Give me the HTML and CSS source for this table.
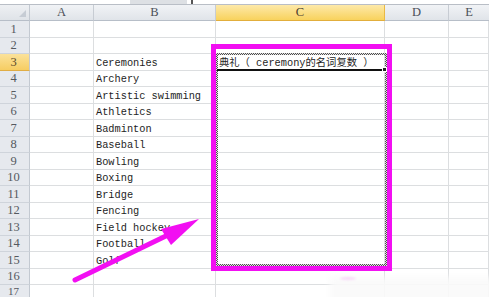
FILE: index.html
```html
<!DOCTYPE html>
<html>
<head>
<meta charset="utf-8">
<link rel="stylesheet" href="styles.css">
</head>
<body>
<div class="sheet">
  <div class="topbar"><span class="namebox"></span><span class="fxmark"></span></div>
  <div class="grid">
    <div class="corner"><span class="tri"></span></div>
    <div class="ch">A</div><div class="ch">B</div><div class="ch sel">C</div><div class="ch">D</div><div class="ch last">E</div>

    <div class="rh">1</div><div class="c"></div><div class="c"></div><div class="c"></div><div class="c"></div><div class="c"></div>
    <div class="rh">2</div><div class="c"></div><div class="c"></div><div class="c"></div><div class="c"></div><div class="c"></div>
    <div class="rh sel">3</div><div class="c"></div><div class="c t">Ceremonies</div><div class="c t head">典礼（ ceremony的名词复数 ）</div><div class="c"></div><div class="c"></div>
    <div class="rh">4</div><div class="c"></div><div class="c t">Archery</div><div class="c"></div><div class="c"></div><div class="c"></div>
    <div class="rh">5</div><div class="c"></div><div class="c t">Artistic swimming</div><div class="c"></div><div class="c"></div><div class="c"></div>
    <div class="rh">6</div><div class="c"></div><div class="c t">Athletics</div><div class="c"></div><div class="c"></div><div class="c"></div>
    <div class="rh">7</div><div class="c"></div><div class="c t">Badminton</div><div class="c"></div><div class="c"></div><div class="c"></div>
    <div class="rh">8</div><div class="c"></div><div class="c t">Baseball</div><div class="c"></div><div class="c"></div><div class="c"></div>
    <div class="rh">9</div><div class="c"></div><div class="c t">Bowling</div><div class="c"></div><div class="c"></div><div class="c"></div>
    <div class="rh">10</div><div class="c"></div><div class="c t">Boxing</div><div class="c"></div><div class="c"></div><div class="c"></div>
    <div class="rh">11</div><div class="c"></div><div class="c t">Bridge</div><div class="c"></div><div class="c"></div><div class="c"></div>
    <div class="rh">12</div><div class="c"></div><div class="c t">Fencing</div><div class="c"></div><div class="c"></div><div class="c"></div>
    <div class="rh">13</div><div class="c"></div><div class="c t">Field hockey</div><div class="c"></div><div class="c"></div><div class="c"></div>
    <div class="rh">14</div><div class="c"></div><div class="c t">Football</div><div class="c"></div><div class="c"></div><div class="c"></div>
    <div class="rh">15</div><div class="c"></div><div class="c t">Golf</div><div class="c"></div><div class="c"></div><div class="c"></div>
    <div class="rh">16</div><div class="c"></div><div class="c"></div><div class="c"></div><div class="c"></div><div class="c"></div>
    <div class="rh edge"><span class="num">17</span></div><div class="c"></div><div class="c"></div><div class="c"></div><div class="c"></div><div class="c"></div>
  </div>

  <div class="ants"></div>
  <div class="active-line"></div>
  <div class="handle"></div>
  <div class="mark"></div>

  <svg class="arrow" width="489" height="297" viewBox="0 0 489 297">
    <line x1="75" y1="280" x2="170" y2="234" stroke="#f20ff2" stroke-width="5" stroke-linecap="round"/>
    <polygon points="199,219 161,229 171,245" fill="#f20ff2"/>
  </svg>

  <div class="fade"></div>
  <div class="smudge"></div>
</div>
</body>
</html>
```

FILE: styles.css
```css
html, body {
  margin: 0;
  padding: 0;
  background: #ffffff;
  overflow: hidden;
}

.sheet {
  position: relative;
  width: 489px;
  height: 297px;
  overflow: hidden;
}

.topbar {
  height: 4px;
  background: #ffffff;
  border-bottom: 1px solid #b9bec6;
  display: flex;
}

.namebox {
  margin-left: 130px;
  width: 57px;
  height: 4px;
  background: #dde0e4;
}

.fxmark {
  width: 2px;
  height: 4px;
  margin-left: 4px;
  background: #555555;
}

.grid {
  display: grid;
  grid-template-columns: 30px 64px 122px 169px 64px 40px;
  grid-template-rows: 16px repeat(17, 16.5px);
}

.corner {
  position: relative;
  background: linear-gradient(#eef0f3, #dfe3e8);
  border-right: 1px solid #c3c9d1;
  border-bottom: 1px solid #b7bec8;
}

.tri {
  position: absolute;
  right: 3px;
  bottom: 3px;
  width: 0;
  height: 0;
  border-left: 7px solid transparent;
  border-bottom: 7px solid #c6ccd4;
}

.ch {
  display: flex;
  align-items: center;
  justify-content: center;
  font-family: "Liberation Serif", "DejaVu Serif", serif;
  font-size: 12.5px;
  color: #4a4f57;
  background: linear-gradient(#f1f3f6, #e0e4e9);
  border-right: 1px solid #c7ccd3;
  border-bottom: 1px solid #b7bec8;
}

.ch.sel {
  background: linear-gradient(#fde9a9, #f8d25d);
  border-right: 1px solid #e9b944;
  border-bottom: 1px solid #e2ae3c;
  color: #4a4030;
}

.ch.last {
  border-right: none;
}

.rh {
  display: flex;
  align-items: center;
  justify-content: center;
  font-family: "Liberation Serif", "DejaVu Serif", serif;
  font-size: 12.5px;
  line-height: 12px;
  color: #55595f;
  background: #e6e9ee;
  border-right: 1px solid #c3c9d1;
  border-bottom: 1px solid #cfd4db;
  padding-right: 2px;
}

.rh.edge {
  align-items: flex-start;
  font-size: 11px;
  line-height: 12px;
}

.rh.edge .num {
  margin-top: -0.5px;
}

.rh.sel {
  background: linear-gradient(#fbe29a, #f6cd62);
  border-bottom: 1px solid #e0ad45;
  color: #5a4a2a;
}

.c {
  border-right: 1px solid #dcdee0;
  border-bottom: 1px solid #dcdee0;
  min-width: 0;
  overflow: visible;
  white-space: nowrap;
}

.t {
  display: flex;
  align-items: center;
  padding-left: 2px;
  padding-top: 2px;
  font-family: "Liberation Mono", "Noto Sans CJK SC", monospace;
  font-size: 10.3px;
  line-height: 12px;
  color: #1e1e1e;
}

.head {
  padding-left: 3px;
  font-family: "Liberation Mono", "Noto Sans CJK SC", monospace;
}

.ants {
  position: absolute;
  left: 216px;
  top: 53px;
  width: 171px;
  height: 213px;
  box-sizing: border-box;
  padding: 2px;
  background: repeating-conic-gradient(#4e4e4e 0 25%, #e4e4e4 0 50%) 0 0 / 2px 2px;
  -webkit-mask: linear-gradient(#000 0 0) content-box, linear-gradient(#000 0 0);
  -webkit-mask-composite: xor;
  mask: linear-gradient(#000 0 0) content-box exclude, linear-gradient(#000 0 0);
}

.active-line {
  position: absolute;
  left: 217px;
  top: 69px;
  width: 166px;
  height: 2px;
  background: #111111;
}

.handle {
  position: absolute;
  left: 382px;
  top: 67px;
  width: 5px;
  height: 5px;
  background: #222222;
  border: 1px solid #ffffff;
  box-sizing: border-box;
}

.mark {
  position: absolute;
  left: 211px;
  top: 44px;
  width: 181px;
  height: 227px;
  box-sizing: border-box;
  border: 5.5px solid #f20ff2;
}

.arrow {
  position: absolute;
  left: 0;
  top: 0;
  pointer-events: none;
}

.fade {
  position: absolute;
  left: 330px;
  top: 277px;
  width: 170px;
  height: 30px;
  background: rgba(250, 250, 250, 0.9);
  filter: blur(3px);
}

.smudge {
  position: absolute;
  left: 340px;
  top: 277px;
  width: 16px;
  height: 3px;
  border-radius: 50%;
  background: rgba(242, 150, 242, 0.35);
  filter: blur(1px);
}
```
